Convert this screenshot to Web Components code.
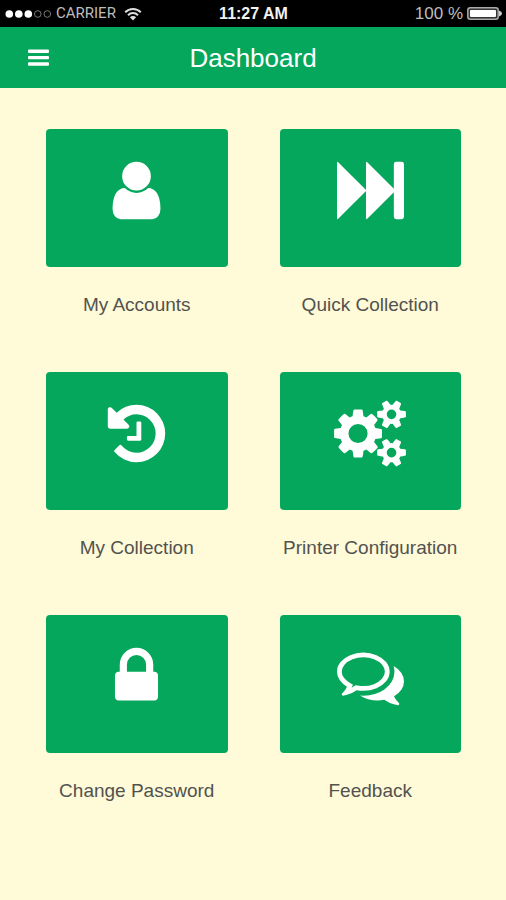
<!DOCTYPE html>
<html lang="en">
<head>
<meta charset="utf-8">
<meta name="viewport" content="width=device-width, initial-scale=1">
<title>Dashboard</title>
<style>
  :root {
    --color-primary: #04a75b;
    --color-background: #fffad7;
    --color-label: #525250;
    --color-white: #fff;
  }

  body {
    margin: 0;
    min-height: 100vh;
    background: var(--color-background);
    font-family: "Liberation Sans", Arial, sans-serif;
  }
</style>
</head>
<body>
<status-bar carrier="CARRIER" time="11:27 AM" battery="100 %"></status-bar>
<app-header>Dashboard</app-header>
<tile-grid>
  <menu-tile icon="user" href="#accounts">My Accounts</menu-tile>
  <menu-tile icon="forward" href="#quick-collection">Quick Collection</menu-tile>
  <menu-tile icon="history" href="#collection">My Collection</menu-tile>
  <menu-tile icon="cogs" href="#printer">Printer Configuration</menu-tile>
  <menu-tile icon="lock" href="#password">Change Password</menu-tile>
  <menu-tile icon="comments" href="#feedback">Feedback</menu-tile>
</tile-grid>

<script>
const ICONS = {
  user: {
    width: 67,
    viewBox: '0 0 1792 1792',
    path: 'M1536 1399q0 109-62.5 187t-150.5 78h-854q-88 0-150.5-78t-62.5-187q0-85 8.5-160.5t31.5-152 58.5-131 94-89 134.5-34.5q131 128 313 128t313-128q76 0 134.5 34.5t94 89 58.5 131 31.5 152 8.5 160.5zm-256-887q0 159-112.5 271.5t-271.5 112.5-271.5-112.5-112.5-271.5 112.5-271.5 271.5-112.5 271.5 112.5 112.5 271.5z'
  },
  forward: {
    width: 67,
    viewBox: '0 0 1792 1792',
    path: 'M0 160q0-52 40-16l736 736v-720q0-52 40-16l704 704v-656q0-64 64-64h144q64 0 64 64v1408q0 64-64 64h-144q-64 0-64-64v-656l-704 704q-40 36-40-16v-720l-736 736q-40 36-40-16z'
  },
  history: {
    width: 67,
    viewBox: '0 0 1792 1792',
    path: 'M1664 896q0 156-61 298t-164 245-245 164-298 61q-172 0-327-72.5t-264-204.5q-7-10-6.5-22.5t8.5-20.5l137-138q10-9 25-9 16 2 23 12 73 95 179 147t225 52q104 0 198.5-40.5t163.5-109.5 109.5-163.5 40.5-198.5-40.5-198.5-109.5-163.5-163.5-109.5-198.5-40.5q-98 0-188 35.5t-160 101.5l137 138q31 30 14 69-17 40-59 40h-448q-26 0-45-19t-19-45v-448q0-42 40-59 39-17 69 14l130 129q107-101 244.5-156.5t284.5-55.5q156 0 298 61t245 164 164 245 61 298zm-640-288v448q0 14-9 23t-23 9h-320q-14 0-23-9t-9-23v-64q0-14 9-23t23-9h224v-352q0-14 9-23t23-9h64q14 0 23 9t9 23z'
  },
  cogs: {
    width: 72,
    viewBox: '-64 0 1920 1792',
    path: 'M832 896q0-106-75-181t-181-75-181 75-75 181 75 181 181 75 181-75 75-181zm768 512q0-52-38-90t-90-38-90 38-38 90q0 53 37.5 90.5t90.5 37.5 90.5-37.5 37.5-90.5zm0-1024q0-52-38-90t-90-38-90 38-38 90q0 53 37.5 90.5t90.5 37.5 90.5-37.5 37.5-90.5zm-384 421v185q0 10-7 19.5t-16 10.5l-155 24q-11 35-32 76 34 48 90 115 7 11 7 20 0 12-7 19-23 30-82.5 89.5t-78.5 59.5q-11 0-21-7l-115-90q-37 19-77 31-11 108-23 155-7 24-30 24h-186q-11 0-20-7.5t-10-17.5l-23-153q-34-10-75-31l-118 89q-7 7-20 7-11 0-21-8-144-133-144-160 0-9 7-19 10-14 41-53t47-61q-23-44-35-82l-152-24q-10-1-17-9.5t-7-19.5v-185q0-10 7-19.5t16-10.5l155-24q11-35 32-76-34-48-90-115-7-11-7-20 0-12 7-20 22-30 82-89t79-59q11 0 21 7l115 90q34-18 77-32 11-108 23-154 7-24 30-24h186q11 0 20 7.5t10 17.5l23 153q34 10 75 31l118-89q8-7 20-7 11 0 21 8 144 133 144 160 0 8-7 19-12 16-42 54t-45 60q23 48 34 82l152 23q10 2 17 10.5t7 19.5zm640 533v140q0 16-149 31-12 27-30 52 51 113 51 138 0 4-4 7-122 71-124 71-8 0-46-47t-52-68q-20 2-30 2t-30-2q-14 21-52 68t-46 47q-2 0-124-71-4-3-4-7 0-25 51-138-18-25-30-52-149-15-149-31v-140q0-16 149-31 13-29 30-52-51-113-51-138 0-4 4-7 4-2 35-20t59-34 30-16q8 0 46 46.5t52 67.5q20-2 30-2t30 2q51-71 92-112l6-2q4 0 124 70 4 3 4 7 0 25-51 138 17 23 30 52 149 15 149 31zm0-1024v140q0 16-149 31-12 27-30 52 51 113 51 138 0 4-4 7-122 71-124 71-8 0-46-47t-52-68q-20 2-30 2t-30-2q-14 21-52 68t-46 47q-2 0-124-71-4-3-4-7 0-25 51-138-18-25-30-52-149-15-149-31v-140q0-16 149-31 13-29 30-52-51-113-51-138 0-4 4-7 4-2 35-20t59-34 30-16q8 0 46 46.5t52 67.5q20-2 30-2t30 2q51-71 92-112l6-2q4 0 124 70 4 3 4 7 0 25-51 138 17 23 30 52 149 15 149 31z'
  },
  lock: {
    width: 67,
    viewBox: '0 0 1792 1792',
    path: 'M640 768h512v-192q0-106-75-181t-181-75-181 75-75 181v192zm832 96v576q0 40-28 68t-68 28h-960q-40 0-68-28t-28-68v-576q0-40 28-68t68-28h32v-192q0-184 132-316t316-132 316 132 132 316v192h32q40 0 68 28t28 68z'
  },
  comments: {
    width: 67,
    viewBox: '0 0 1792 1792',
    path: 'M704 384q-153 0-286 52t-211.5 141-78.5 191q0 82 53 158t149 132l97 56-35 84q34-20 62-39l44-31 53 10q78 14 153 14 153 0 286-52t211.5-141 78.5-191-78.5-191-211.5-141-286-52zm0-128q191 0 353.5 68.5t256.5 186.5 94 257-94 257-256.5 186.5-353.5 68.5q-86 0-176-16-124 88-278 128-36 9-86 16h-3q-11 0-20.5-8t-11.5-21q-1-3-1-6.5t.5-6.5 2-6l2.5-5 3.5-5.5 4-5 4.5-5 4-4.5q5-6 23-25t26-29.5 22.5-29 25-38.5 20.5-44q-124-72-195-177t-71-224q0-139 94-257t256.5-186.5 353.5-68.5zm822 1169q10 24 20.5 44t25 38.5 22.5 29 26 29.5 23 25q1 1 4 4.5t4.5 5 4 5 3.5 5.5l2.5 5 2 6 .5 6.5-1 6.5q-3 14-13 22t-22 7q-50-7-86-16-154-40-278-128-90 16-176 16-271 0-472-132 58 4 88 4 161 0 309-45t264-129q125-92 192-212t67-254q0-77-23-152 129 71 204 178t75 230q0 120-71 224.5t-195 176.5z'
  }
};

class StatusBar extends HTMLElement {
  constructor() {
    super();
    this.attachShadow({ mode: 'open' });
  }

  connectedCallback() {
    this.render();
  }

  render() {
    const styles = `
      :host {
        display: grid;
        grid-template-columns: 1fr auto 1fr;
        align-items: center;
        height: 27px;
        padding: 0 4px 0 5px;
        background: #000;
        color: #bdbdbd;
        font-size: 17px;
        line-height: 27px;
        white-space: nowrap;
      }

      svg {
        display: block;
      }

      .network,
      .power {
        display: flex;
        align-items: center;
        gap: 4px;
      }

      .carrier {
        font-family: Roboto, "Liberation Sans", sans-serif;
        font-size: 15px;
      }

      .wifi {
        margin-left: 4px;
      }

      .time {
        color: #f2f2f2;
        font-size: 16px;
        font-weight: bold;
      }

      .power {
        justify-content: flex-end;
      }
    `;

    this.shadowRoot.innerHTML = `
      <style>${styles}</style>
      <div class="network">
        <svg width="47" height="10" viewBox="0 0 47 10" role="img" aria-label="Signal 3 of 5">
          <g fill="#fff">
            <circle cx="4.3" cy="5" r="3.8"/>
            <circle cx="13.8" cy="5" r="3.8"/>
            <circle cx="23.3" cy="5" r="3.8"/>
          </g>
          <g fill="none" stroke="#777">
            <circle cx="32.8" cy="5" r="3.3"/>
            <circle cx="42.3" cy="5" r="3.3"/>
          </g>
        </svg>
        <span class="carrier">${this.getAttribute('carrier')}</span>
        <svg class="wifi" width="18" height="14" viewBox="0 0 18 14" role="img" aria-label="Wi-Fi">
          <g fill="none" stroke="#ddd" stroke-width="2">
            <path d="M1.2 5.2a11 11 0 0 1 15.6 0"/>
            <path d="M4 8.2a7 7 0 0 1 10 0"/>
          </g>
          <path d="M5.9 10.2a4.4 4.4 0 0 1 6.2 0L9 13.4z" fill="#ddd"/>
        </svg>
      </div>
      <span class="time">${this.getAttribute('time')}</span>
      <div class="power">
        <span>${this.getAttribute('battery')}</span>
        <svg width="35" height="13" viewBox="0 0 35 13" aria-hidden="true">
          <rect x=".8" y=".8" width="30.4" height="11.4" rx="2.5" fill="#333" stroke="#aaa" stroke-width="1.5"/>
          <rect x="3" y="3" width="26" height="7" rx="1" fill="#fff"/>
          <path d="M32 3.5q3 1 3 3t-3 3z" fill="#ccc"/>
        </svg>
      </div>
    `;
  }
}

class AppHeader extends HTMLElement {
  constructor() {
    super();
    this.attachShadow({ mode: 'open' });
    this.render();
  }

  render() {
    const styles = `
      :host {
        display: grid;
        grid-template-columns: 1fr auto 1fr;
        align-items: center;
        height: 61px;
        padding: 0 20px;
        background: var(--color-primary);
        color: var(--color-white);
      }

      button {
        justify-self: start;
        padding: 8px;
        border: none;
        background: none;
        color: inherit;
        cursor: pointer;
      }

      svg {
        display: block;
      }

      h1 {
        margin: 0;
        font-size: 26px;
        font-weight: normal;
        line-height: 32px;
      }
    `;

    this.shadowRoot.innerHTML = `
      <style>${styles}</style>
      <button type="button" aria-label="Open menu">
        <svg width="21" height="17" viewBox="0 0 21 17" fill="currentColor">
          <rect y="0.5" width="21" height="3.4" rx="1"/>
          <rect y="6.9" width="21" height="3.4" rx="1"/>
          <rect y="13.3" width="21" height="3.4" rx="1"/>
        </svg>
      </button>
      <h1><slot></slot></h1>
    `;
  }
}

class TileGrid extends HTMLElement {
  constructor() {
    super();
    this.attachShadow({ mode: 'open' });
    this.render();
  }

  render() {
    const styles = `
      :host {
        display: grid;
        grid-template-columns: 1fr 1fr;
        gap: 54px 52px;
        padding: 41px 45px 41px 46px;
      }
    `;

    this.shadowRoot.innerHTML = `
      <style>${styles}</style>
      <slot></slot>
    `;
  }
}

class MenuTile extends HTMLElement {
  constructor() {
    super();
    this.attachShadow({ mode: 'open' });
  }

  connectedCallback() {
    this.render();
  }

  render() {
    const icon = ICONS[this.getAttribute('icon')];
    const styles = `
      :host {
        display: block;
      }

      a {
        display: flex;
        flex-direction: column;
        gap: 25px;
        color: var(--color-label);
        font-size: 19px;
        line-height: 26px;
        text-align: center;
        text-decoration: none;
      }

      .card {
        display: flex;
        justify-content: center;
        padding: 28px 0 43px;
        border-radius: 4px;
        background: var(--color-primary);
        color: var(--color-white);
      }

      svg {
        display: block;
      }

      .label {
        white-space: nowrap;
      }
    `;

    this.shadowRoot.innerHTML = `
      <style>${styles}</style>
      <a href="${this.getAttribute('href')}">
        <span class="card">
          <svg width="${icon.width}" height="67" viewBox="${icon.viewBox}" fill="currentColor" aria-hidden="true">
            <path d="${icon.path}"/>
          </svg>
        </span>
        <span class="label"><slot></slot></span>
      </a>
    `;
  }
}

customElements.define('status-bar', StatusBar);
customElements.define('app-header', AppHeader);
customElements.define('tile-grid', TileGrid);
customElements.define('menu-tile', MenuTile);
</script>
</body>
</html>
